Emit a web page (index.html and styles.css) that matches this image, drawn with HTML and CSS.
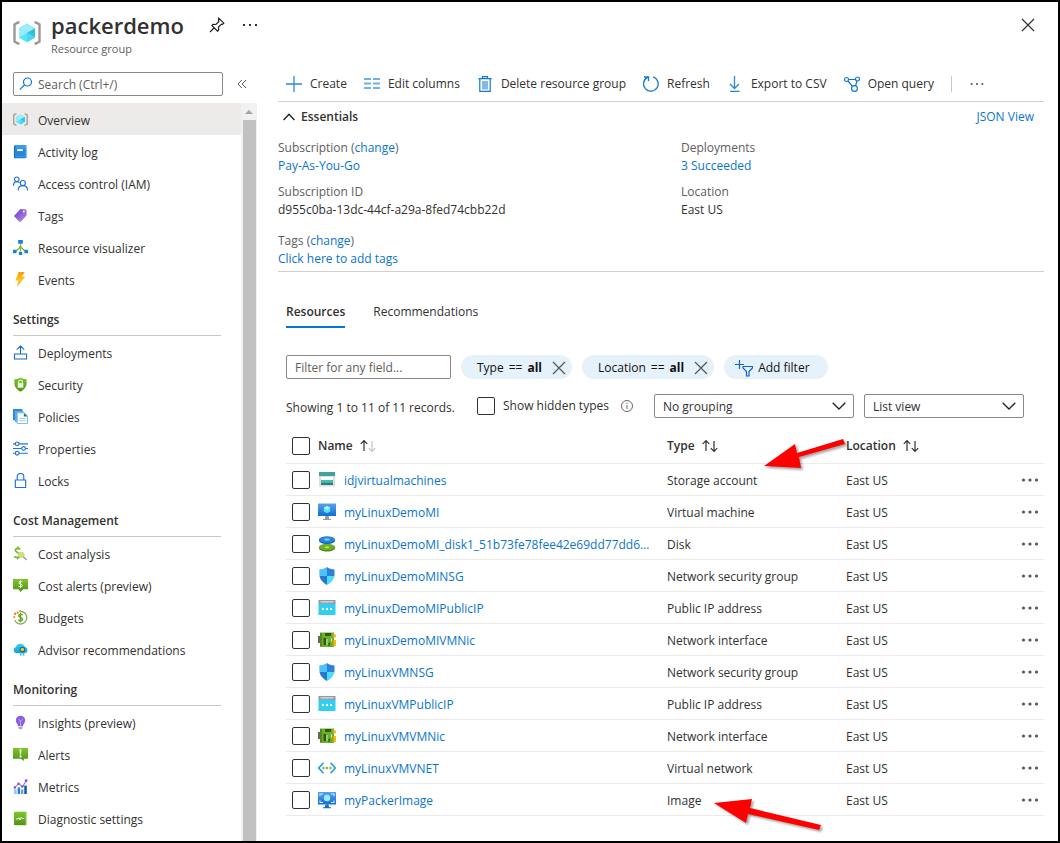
FILE: index.html
```html
<!DOCTYPE html>
<html lang="en">
<head>
<meta charset="utf-8">
<meta name="viewport" content="width=device-width, initial-scale=1">
<title>packerdemo - Resource group</title>
<link rel="stylesheet" href="styles.css">
</head>
<body>
<svg class="sprite" aria-hidden="true">
  <defs>
    <linearGradient id="g-blue" x1="0" y1="0" x2="0" y2="1"><stop offset="0" stop-color="#5ea0ef"/><stop offset="1" stop-color="#0f6fd0"/></linearGradient>
    <linearGradient id="g-green" x1="0" y1="0" x2="0" y2="1"><stop offset="0" stop-color="#7fc62c"/><stop offset="1" stop-color="#4f9217"/></linearGradient>
    <linearGradient id="g-purple" x1="0" y1="0" x2="1" y2="1"><stop offset="0" stop-color="#6a35c4"/><stop offset="1" stop-color="#b795ee"/></linearGradient>
    <linearGradient id="g-bolt" x1="0" y1="0" x2="0" y2="1"><stop offset="0" stop-color="#f99b16"/><stop offset=".5" stop-color="#fdc413"/><stop offset="1" stop-color="#fba81a"/></linearGradient>
    <linearGradient id="g-cyan" x1="0" y1="0" x2="0" y2="1"><stop offset="0" stop-color="#32d4f5"/><stop offset="1" stop-color="#1a9fd0"/></linearGradient>
  </defs>
  <symbol id="i-group" viewBox="0 0 28 28">
    <path d="M6.500 3.500H5L1.500 5.500V22.500L5 24.500H6.500M21.500 3.500H23L26.500 5.500V22.500L23 24.500H21.500" fill="none" stroke="#999" stroke-width="2.400"/>
    <path d="M14 4.500l8 4.700v9.400l-8 4.700-8-4.700V9.200z" fill="#50e6ff"/>
    <path d="M14 4.500l8 4.700-8 4.700-8-4.700z" fill="#9cebff"/>
    <path d="M22 9.200v9.400l-8-4.700z" fill="#32bedd"/><path d="M22 18.600l-8-4.700v9.400z" fill="#50d4f5"/><path d="M6 9.200l8 4.700-8 4.700z" fill="#9cebff"/>
  </symbol>
  <symbol id="i-log" viewBox="0 0 16 16">
    <rect x="2" y="1" width="13" height="14" rx="1" fill="#86c0f2"/><path d="M2 1h11.500v12.500H2z" fill="#3f9ae6"/><path d="M1 1.800h1.500V14h11v1.300H2.500Q1 15.300 1 14z" fill="#0f6cbd"/><path d="M2.500 5h11v8.500h-11z" fill="#2b88d8"/><rect x="4.500" y="5.500" width="6" height="2" fill="#fff"/>
  </symbol>
  <symbol id="i-people" viewBox="0 0 16 16" fill="none" stroke="#1f6fe0" stroke-width="1.200">
    <circle cx="4" cy="3.500" r="2.500"/><path d="M.5 10.500C.5 7.500 2 6 4 6q2 0 3 1.500"/><circle cx="10.500" cy="7.500" r="2.700"/><path d="M5.500 15.500c0-3.500 2-5.200 5-5.200s5 1.700 5 5.200"/>
  </symbol>
  <symbol id="i-tag" viewBox="0 0 16 16"><path d="M1 8.500L8 1l5.500.5L14.500 3v5L8.500 14.500Q7.500 15.500 6.500 14.500z" fill="url(#g-purple)"/><circle cx="11.500" cy="3.800" r="1.100" fill="#fff"/></symbol>
  <symbol id="i-tree" viewBox="0 0 16 16">
    <path d="M8 4v8M8 7.500L3 12M8 7.500l5 4.500" fill="none" stroke="#76bc2d" stroke-width="1.300"/><circle cx="8" cy="7.500" r="1.300" fill="#76bc2d"/>
    <path d="M5.500 0h5v4h-5zM0 10.500h3.800v3.500H0zM12.200 10.500H16V14h-3.800zM6.200 12.500h3.600V16H6.200z" fill="#1b7fdc"/>
  </symbol>
  <symbol id="i-bolt" viewBox="0 0 16 16"><path d="M6 0h6.500L9.500 5H13L4 16l2-7H2.500z" fill="url(#g-bolt)"/></symbol>
  <symbol id="i-deploy" viewBox="0 0 16 16" fill="none" stroke="#1566d6" stroke-width="1.100"><path d="M8 9V1M4 5l4-4 4 4M1.500 9.500h13v5.500h-13z"/></symbol>
  <symbol id="i-shieldlock" viewBox="0 0 16 16"><path d="M8 .5c2 1.500 4 1.800 6.500 1.800V7c0 4-3 6.800-6.500 8.700C4.500 13.800 1.500 11 1.500 7V2.300C4 2.300 6 2 8 .5z" fill="url(#g-green)"/><rect x="5" y="6.500" width="6" height="5" rx=".6" fill="#e8f5dc"/><path d="M6 7V5.300a2 2 0 014 0V7" fill="none" stroke="#e8f5dc" stroke-width="1.200"/></symbol>
  <symbol id="i-policy" viewBox="0 0 16 16"><path d="M0 0h10v3H3v9H0z" fill="#2b88d8"/><path d="M2 2h9v12H2z" fill="#5ea8ee"/><path d="M4.500 4H12l3.500 3.500V15.500H4.500z" fill="#fff" stroke="#76b6ee"/><path d="M11.500 4v4h4z" fill="#0f6cbd"/><path d="M6.500 10h7M6.500 12.500h7" stroke="#9cc8f2"/></symbol>
  <symbol id="i-sliders" viewBox="0 0 16 16" fill="none" stroke="#2275dd" stroke-width="1.200"><path d="M0 3h2.500M6.500 3H16M0 8h9M13.500 8H16M0 13h2.500M6.500 13H16"/><circle cx="4.500" cy="3" r="2"/><circle cx="11.300" cy="8" r="2"/><circle cx="4.500" cy="13" r="2"/></symbol>
  <symbol id="i-lock" viewBox="0 0 16 16" fill="none" stroke="#1f6fe0" stroke-width="1.200"><path d="M2.500 7.500h11v8h-11zM4.500 7.500V4a3.500 3.500 0 017 0v3.500"/></symbol>
  <symbol id="i-costsearch" viewBox="0 0 16 16" fill="none"><path d="M7.800 3.500C7 2.500 2.500 2 2.500 4.500S7.500 7 7.500 9.800 3 12.500 1.500 11M5 .5v2M5 12v2" stroke="#76bc2d" stroke-width="1.900"/><circle cx="9" cy="9.500" r="2.900" fill="#c8ee3c" stroke="#ccc"/><path d="M11 11.500l3.500 3.500" stroke="#999" stroke-width="1.400"/></symbol>
  <symbol id="i-costalert" viewBox="0 0 16 16"><path d="M0 1h16v11h-5l-3 3-2-3H0z" fill="url(#g-green)"/><path d="M10 4.300C9 3.300 6.300 3.300 6.300 5s3.500 1.200 3.500 3-3 1.600-3.900.6M8 2.500v8" stroke="#fff" fill="none"/></symbol>
  <symbol id="i-budget" viewBox="0 0 16 16" fill="none"><path d="M8 1.500A6.700 6.700 0 118 15 6.700 6.700 0 012 11" stroke="#76a83d" stroke-width="1.200"/><path d="M10.300 5.500C9.500 4.300 6 4.300 6 6.200s4.200 1.500 4.200 3.600-3.500 2-4.500.6M8 3v10" stroke="#5faa20" stroke-width="1.500"/><g fill="#f58220"><circle cx="1.300" cy="7.500" r="1.100"/><circle cx="2.300" cy="4" r="1.300"/><circle cx="5" cy="2.800" r="1.200"/><circle cx="7.500" cy="1" r="1"/></g></symbol>
  <symbol id="i-advisor" viewBox="0 0 16 16"><path d="M3.500 12A3.400 3.400 0 013 5.400 5 5 0 0112.500 5a3.600 3.600 0 01.5 7z" fill="url(#g-cyan)"/><path d="M8 11l-.5 4 1.700-1V12zM11.500 11l.8 4-1.800-1V12z" fill="#32c0e8"/><circle cx="10" cy="8" r="3" fill="#0f6a9c"/><circle cx="10" cy="8" r="1.900" fill="#ffc20e"/></symbol>
  <symbol id="i-bulb" viewBox="0 0 16 16"><path d="M8 .8a5 5 0 015 5c0 2.400-2 3.400-2.400 6H5.400C5 9.200 3 8.200 3 5.800a5 5 0 015-5z" fill="#8a5fd8"/><path d="M6 4.500l2 2 2-2M8 6.500V12" stroke="#c9aef5" fill="none"/><path d="M5.800 12.300h4.400v1.800L9 15.300H7l-1.200-1.200z" fill="#aaa"/></symbol>
  <symbol id="i-alert" viewBox="0 0 16 16"><path d="M0 1h16v11.500h-4.500V15L8.500 12.500H0z" fill="url(#g-green)"/><path d="M7 2.500h2l-.4 5.500H7.400z" fill="#fff"/><circle cx="8" cy="10" r="1.100" fill="#fff"/></symbol>
  <symbol id="i-metrics" viewBox="0 0 16 16"><path d="M1 11h3v5H1z" fill="#9cc8f2"/><path d="M5 9h2.500v7H5z" fill="#1b7fdc"/><path d="M8.500 11H11v5H8.500z" fill="#5ea0ef"/><path d="M12 7h2.700v9H12z" fill="#0f5aa8"/><path d="M2 9l4-4 4 3.500L14 2" stroke="#9b6be0" stroke-width="1.100" fill="none"/><g fill="#8a4fd8"><circle cx="2" cy="9" r="1.300"/><circle cx="6" cy="5" r="1.300"/><circle cx="10" cy="8" r="1.300"/><circle cx="14" cy="1.800" r="1.500"/></g></symbol>
  <symbol id="i-diag" viewBox="0 0 16 16"><rect x="2" y=".5" width="13" height="15" rx="1" fill="#b6dc8d"/><rect x="1" y="1" width="12.500" height="14" rx=".6" fill="url(#g-green)"/><path d="M3 8.500h2l1.500-1.500 1 2.500L9 6.500l1 1.500h2" stroke="#fff" fill="none"/></symbol>
  <symbol id="i-storage" viewBox="0 0 18 18"><path d="M1 1h16v4H1z" fill="#37a6a0"/><path d="M1 5h16v10.500H1z" fill="#ddd"/><path d="M3 6h12v3H3z" fill="#fff"/><path d="M3 9h12v2.500H3z" fill="#37c2b1"/><path d="M3 11.500h12V14H3z" fill="#258277"/></symbol>
  <symbol id="i-vm" viewBox="0 0 18 18"><path d="M0 .5h18V13H0z" fill="url(#g-blue)"/><path d="M9 3l3.200 1.800v3.700L9 10.300 5.800 8.500V4.800z" fill="#50e6ff"/><path d="M9 3l3.200 1.800L9 6.700 5.800 4.800z" fill="#c3f1ff"/><path d="M7.300 13h3.400l.5 3H13v1H5v-1h1.800z" fill="#999"/></symbol>
  <symbol id="i-disk" viewBox="0 0 18 18"><path d="M1 12v1.200c0 1.800 3.500 3.300 8 3.300s8-1.500 8-3.300V12z" fill="#4f8a1c"/><ellipse cx="9" cy="12" rx="8" ry="3.300" fill="#6cae2c"/><ellipse cx="9" cy="12.300" rx="2.500" ry="1" fill="#b4ec36"/><path d="M1 4.500v1.200C1 7.500 4.500 9 9 9s8-1.500 8-3.300V4.500z" fill="#0f68bd"/><ellipse cx="9" cy="4.500" rx="8" ry="3.300" fill="#2b83dc"/><ellipse cx="9" cy="4.500" rx="3" ry="1.100" fill="#83d5ff"/></symbol>
  <symbol id="i-nsg" viewBox="0 0 18 18"><clipPath id="shield-shape"><path d="M9 0c2.300 2 4.700 2.200 7.500 2.400V8c0 4.800-4 7.800-7.500 10C5.500 15.800 1.500 12.800 1.500 8V2.400C4.300 2.200 6.700 2 9 0z"/></clipPath><g clip-path="url(#shield-shape)"><path d="M0 0h9v9H0z" fill="#44a5f0"/><path d="M9 0h9v9H9z" fill="#2b83d8"/><path d="M0 9h9v9H0z" fill="#2878d0"/><path d="M9 9h9v9H9z" fill="#50dcff"/><path d="M0 2h9v7H0z" fill="#50dcff" opacity=".55"/></g></symbol>
  <symbol id="i-ip" viewBox="0 0 18 18"><path d="M.5 1h17v4H.5z" fill="#999"/><path d="M2.500 2.200h13v1.300h-13z" fill="#ddd"/><path d="M.5 4.500h17v11.500H.5z" fill="#32cdf0"/><g fill="#fff"><circle cx="5" cy="10" r="1.200"/><circle cx="9" cy="10" r="1.200"/><circle cx="13" cy="10" r="1.200"/></g></symbol>
  <symbol id="i-nic" viewBox="0 0 18 18"><path d="M0 5h2v7H0z" fill="#666"/><path d="M2 1.500h14V16H2z" fill="#6cb02c"/><path d="M15.500 3.500H18v3h-2.500zM15.500 9H18v6h-2.500z" fill="#ffb900"/><path d="M2 2h2v13H2z" fill="#4f8a1c"/><path d="M7 2h6v3H7zM5.500 7H8v7H5.500zM10.500 11.500H12V15h-1.500z" fill="#2f5b10"/><path d="M9 8v6M13.500 7v4" stroke="#c5e89c"/></symbol>
  <symbol id="i-vnet" viewBox="0 0 18 18"><path d="M5.500 3.800L.8 9l4.700 5.200M12.500 3.800L17.200 9l-4.700 5.200" fill="none" stroke="#2b9fe8" stroke-width="1.700"/><g fill="#76bc2d"><circle cx="5.500" cy="9" r="1.200"/><circle cx="9" cy="9" r="1.200"/><circle cx="12.500" cy="9" r="1.200"/></g></symbol>
  <symbol id="i-image" viewBox="0 0 18 18"><path d="M0 1h18v12.500H0z" fill="url(#g-blue)"/><path d="M2 5V3h3M13 3h3v2M2 9.500v2h3M13 11.500h3v-2" stroke="#c3f1ff" stroke-width="1.100" fill="none"/><circle cx="9" cy="7" r="3.200" fill="#9cebff"/><path d="M7.500 13.500h3l.7 2.700H13v1H5v-1h1.800z" fill="#0f6fb8"/></symbol>
  <symbol id="i-chevron" viewBox="0 0 14 8"><path d="M.7.700L7 7 13.300.700" fill="none" stroke="#222" stroke-width="1.300"/></symbol>
  <symbol id="i-x" viewBox="0 0 14 14"><path d="M1 1l12 12M13 1L1 13" fill="none" stroke="currentColor" stroke-width="1.200"/></symbol>
  <symbol id="i-dots" viewBox="0 0 18 6"><g fill="currentColor"><circle cx="2.500" cy="3" r="1.600"/><circle cx="9" cy="3" r="1.600"/><circle cx="15.500" cy="3" r="1.600"/></g></symbol>
  <symbol id="i-dots-sq" viewBox="0 0 18 6"><path d="M2 2h2v2H2zM8 2h2v2H8zM14 2h2v2h-2z" fill="currentColor"/></symbol>
  <symbol id="i-up" viewBox="0 0 8 14"><path d="M4 12V1.500M.8 4.800L4 1.500l3.200 3.300" fill="none" stroke="currentColor" stroke-width="1.200"/></symbol>
  <symbol id="i-down" viewBox="0 0 8 14"><path d="M4 2v10.500M.8 9.200L4 12.500l3.200-3.300" fill="none" stroke="currentColor" stroke-width="1.200"/></symbol>
</svg>

<div class="blade">
  <header class="blade-header">
    <svg class="brand-icon"><use href="#i-group"/></svg>
    <div class="brand">
      <h1>packerdemo</h1>
      <p>Resource group</p>
    </div>
    <button class="icon-button" type="button" aria-label="Pin to dashboard"><svg width="16" height="16" viewBox="0 0 16 16" fill="none" stroke="#222" stroke-width="1.200"><path d="M9.800 1.200l5 5-1.300 1.200-1-.3-3 3 .2 2.800-1.200 1.200-5.600-5.600 1.200-1.200 2.800.2 3-3-.4-1.300zM5.500 10.500L1 15"/></svg></button>
    <button class="icon-button" type="button" aria-label="More"><svg width="18" height="6"><use href="#i-dots-sq"/></svg></button>
    <button class="icon-button close" type="button" aria-label="Close"><svg width="14" height="14"><use href="#i-x"/></svg></button>
  </header>

  <div class="blade-body">
    <aside class="sidebar">
      <div class="search-row">
        <div class="search">
          <svg width="14" height="14" viewBox="0 0 14 14" fill="none" stroke="#0f78d4" stroke-width="1.200"><circle cx="8.500" cy="5" r="4"/><path d="M5.500 8L.8 12.700"/></svg>
          <input type="text" placeholder="Search (Ctrl+/)" aria-label="Search menu">
        </div>
        <button class="icon-button" type="button" aria-label="Collapse menu"><svg width="10" height="10" viewBox="0 0 10 10" fill="none" stroke="#555"><path d="M4.800 1L1 5l3.800 4M9 1L5.200 5 9 9"/></svg></button>
      </div>
      <div class="menu-area">
        <nav class="menu" aria-label="Resource menu">
          <a class="item selected" href="#"><svg><use href="#i-group"/></svg>Overview</a>
          <a class="item" href="#"><svg><use href="#i-log"/></svg>Activity log</a>
          <a class="item" href="#"><svg><use href="#i-people"/></svg>Access control (IAM)</a>
          <a class="item" href="#"><svg><use href="#i-tag"/></svg>Tags</a>
          <a class="item" href="#"><svg><use href="#i-tree"/></svg>Resource visualizer</a>
          <a class="item" href="#"><svg><use href="#i-bolt"/></svg>Events</a>
          <h2>Settings</h2>
          <a class="item" href="#"><svg><use href="#i-deploy"/></svg>Deployments</a>
          <a class="item" href="#"><svg><use href="#i-shieldlock"/></svg>Security</a>
          <a class="item" href="#"><svg><use href="#i-policy"/></svg>Policies</a>
          <a class="item" href="#"><svg><use href="#i-sliders"/></svg>Properties</a>
          <a class="item" href="#"><svg><use href="#i-lock"/></svg>Locks</a>
          <h2>Cost Management</h2>
          <a class="item" href="#"><svg><use href="#i-costsearch"/></svg>Cost analysis</a>
          <a class="item" href="#"><svg><use href="#i-costalert"/></svg>Cost alerts (preview)</a>
          <a class="item" href="#"><svg><use href="#i-budget"/></svg>Budgets</a>
          <a class="item" href="#"><svg><use href="#i-advisor"/></svg>Advisor recommendations</a>
          <h2>Monitoring</h2>
          <a class="item" href="#"><svg><use href="#i-bulb"/></svg>Insights (preview)</a>
          <a class="item" href="#"><svg><use href="#i-alert"/></svg>Alerts</a>
          <a class="item" href="#"><svg><use href="#i-metrics"/></svg>Metrics</a>
          <a class="item" href="#"><svg><use href="#i-diag"/></svg>Diagnostic settings</a>
        </nav>
        <div class="scrollbar" aria-hidden="true"><svg width="8" height="4" viewBox="0 0 8 4"><path d="M0 4l4-4 4 4z" fill="#a3a3a3"/></svg><div class="thumb"></div></div>
      </div>
    </aside>

    <main class="content">
      <div class="toolbar">
        <button type="button"><svg viewBox="0 0 16 16"><path d="M8 0v16M0 8h16" stroke="#2b88d8" stroke-width="1.300"/></svg>Create</button>
        <button type="button"><svg viewBox="0 0 16 16"><path d="M0 3h7M9 3h7M0 7.500h7M9 7.500h7M0 12h7M9 12h7" stroke="#6fb1ea" stroke-width="2"/></svg>Edit columns</button>
        <button type="button"><svg viewBox="0 0 16 16" fill="none" stroke="#0f78d4" stroke-width="1.200"><path d="M1.500 2.600h13M5.500 2.500V.6h5v1.900M2.800 2.600v12.800h10.400V2.600"/><path d="M5 5h6v8.500H5z" fill="#7fbaec" stroke="none"/></svg>Delete resource group</button>
        <button type="button"><svg viewBox="0 0 16 16" fill="none" stroke="#0f78d4" stroke-width="1.300"><path d="M10 .9a7.300 7.300 0 11-5.500.5M1 1h4.500v4"/></svg>Refresh</button>
        <button type="button"><svg viewBox="0 0 16 16" fill="none" stroke="#2b88d8" stroke-width="1.300"><path d="M7.500 0v12M3 8l4.500 4.500L12 8M3 15.300h9.500"/></svg>Export to CSV</button>
        <button type="button"><svg viewBox="0 0 16 16" fill="none" stroke="#0f78d4" stroke-width="1.200"><circle cx="2.500" cy="3.500" r="2"/><circle cx="13.500" cy="3" r="2"/><circle cx="10.500" cy="12.500" r="2.900"/><path d="M4.500 3.500h7M4 5l4.500 5.500M13 5l-1.500 5"/></svg>Open query</button>
        <span class="divider"></span>
        <button class="more" type="button" aria-label="More commands"><svg viewBox="0 0 18 6"><use href="#i-dots-sq"/></svg></button>
      </div>

      <section class="essentials">
        <div class="essentials-head">
          <button type="button"><svg width="12" height="8" viewBox="0 0 12 8" fill="none" stroke="#222" stroke-width="1.400"><path d="M.6 7L6 1.300 11.400 7"/></svg>Essentials</button>
          <a href="#">JSON View</a>
        </div>
        <dl class="facts">
          <div><dt>Subscription (<a href="#">change</a>)</dt><dd><a href="#">Pay-As-You-Go</a></dd></div>
          <div><dt>Deployments</dt><dd><a href="#">3 Succeeded</a></dd></div>
          <div><dt>Subscription ID</dt><dd>d955c0ba-13dc-44cf-a29a-8fed74cbb22d</dd></div>
          <div><dt>Location</dt><dd>East US</dd></div>
          <div class="tags"><dt>Tags (<a href="#">change</a>)</dt><dd><a href="#">Click here to add tags</a></dd></div>
        </dl>
      </section>

      <section class="resources">
        <div class="tabs" role="tablist">
          <button type="button" role="tab" aria-selected="true">Resources</button>
          <button type="button" role="tab" aria-selected="false">Recommendations</button>
        </div>

        <div class="filters">
          <input class="filter-box" type="text" placeholder="Filter for any field..." aria-label="Filter for any field">
          <span class="pill"><span>Type</span><span>==</span><b>all</b><button type="button" aria-label="Remove type filter"><svg width="14" height="14"><use href="#i-x"/></svg></button></span>
          <span class="pill"><span>Location</span><span>==</span><b>all</b><button type="button" aria-label="Remove location filter"><svg width="14" height="14"><use href="#i-x"/></svg></button></span>
          <button class="pill add" type="button"><svg width="18" height="18" viewBox="0 0 18 18" fill="none" stroke="#0f62d8" stroke-width="1.200"><path d="M0 5.500h9M4.500 1v9M8 7.500h9.500v1.500l-3.500 3.500v4.500h-2.500v-4.500L8 9z"/></svg>Add filter</button>
        </div>

        <div class="list-options">
          <span class="count">Showing 1 to 11 of 11 records.</span>
          <label class="hidden-types"><input type="checkbox">Show hidden types</label>
          <svg class="info" width="12" height="12" viewBox="0 0 12 12" fill="none" stroke="#666"><circle cx="6" cy="6" r="5.500"/><path d="M6 5v4M6 2.800V4"/></svg>
          <div class="select grouping"><select aria-label="Grouping"><option>No grouping</option></select><svg width="14" height="8"><use href="#i-chevron"/></svg></div>
          <div class="select view"><select aria-label="View"><option>List view</option></select><svg width="14" height="8"><use href="#i-chevron"/></svg></div>
        </div>

        <table>
          <colgroup><col class="c-check"><col class="c-name"><col class="c-type"><col class="c-location"><col class="c-menu"></colgroup>
          <thead>
            <tr>
              <th><input type="checkbox" aria-label="Select all"></th>
              <th><span class="sort">Name<span class="arrows"><svg><use href="#i-up"/></svg><svg class="dim"><use href="#i-down"/></svg></span></span></th>
              <th><span class="sort">Type<span class="arrows"><svg><use href="#i-up"/></svg><svg><use href="#i-down"/></svg></span></span></th>
              <th><span class="sort">Location<span class="arrows"><svg><use href="#i-up"/></svg><svg><use href="#i-down"/></svg></span></span></th>
              <th></th>
            </tr>
          </thead>
          <tbody>
            <tr><td><input type="checkbox" aria-label="Select idjvirtualmachines"></td><td><a class="res" href="#"><svg><use href="#i-storage"/></svg><span>idjvirtualmachines</span></a></td><td class="text anchor">Storage account
              <svg class="callout callout-storage" width="92" height="44" viewBox="0 0 92 44" aria-hidden="true"><path d="M3 32L34 10l2 9L82 5l2 5-46 13 2 11z" fill="#f00"/></svg></td><td class="text">East US</td><td><button class="row-menu" type="button" aria-label="Row actions"><svg width="18" height="6"><use href="#i-dots"/></svg></button></td></tr>
            <tr><td><input type="checkbox" aria-label="Select myLinuxDemoMI"></td><td><a class="res" href="#"><svg><use href="#i-vm"/></svg><span>myLinuxDemoMI</span></a></td><td class="text">Virtual machine</td><td class="text">East US</td><td><button class="row-menu" type="button" aria-label="Row actions"><svg width="18" height="6"><use href="#i-dots"/></svg></button></td></tr>
            <tr><td><input type="checkbox" aria-label="Select myLinuxDemoMI disk"></td><td><a class="res" href="#"><svg><use href="#i-disk"/></svg><span>myLinuxDemoMI_disk1_51b73fe78fee42e69dd77dd6…</span></a></td><td class="text">Disk</td><td class="text">East US</td><td><button class="row-menu" type="button" aria-label="Row actions"><svg width="18" height="6"><use href="#i-dots"/></svg></button></td></tr>
            <tr><td><input type="checkbox" aria-label="Select myLinuxDemoMINSG"></td><td><a class="res" href="#"><svg><use href="#i-nsg"/></svg><span>myLinuxDemoMINSG</span></a></td><td class="text">Network security group</td><td class="text">East US</td><td><button class="row-menu" type="button" aria-label="Row actions"><svg width="18" height="6"><use href="#i-dots"/></svg></button></td></tr>
            <tr><td><input type="checkbox" aria-label="Select myLinuxDemoMIPublicIP"></td><td><a class="res" href="#"><svg><use href="#i-ip"/></svg><span>myLinuxDemoMIPublicIP</span></a></td><td class="text">Public IP address</td><td class="text">East US</td><td><button class="row-menu" type="button" aria-label="Row actions"><svg width="18" height="6"><use href="#i-dots"/></svg></button></td></tr>
            <tr><td><input type="checkbox" aria-label="Select myLinuxDemoMIVMNic"></td><td><a class="res" href="#"><svg><use href="#i-nic"/></svg><span>myLinuxDemoMIVMNic</span></a></td><td class="text">Network interface</td><td class="text">East US</td><td><button class="row-menu" type="button" aria-label="Row actions"><svg width="18" height="6"><use href="#i-dots"/></svg></button></td></tr>
            <tr><td><input type="checkbox" aria-label="Select myLinuxVMNSG"></td><td><a class="res" href="#"><svg><use href="#i-nsg"/></svg><span>myLinuxVMNSG</span></a></td><td class="text">Network security group</td><td class="text">East US</td><td><button class="row-menu" type="button" aria-label="Row actions"><svg width="18" height="6"><use href="#i-dots"/></svg></button></td></tr>
            <tr><td><input type="checkbox" aria-label="Select myLinuxVMPublicIP"></td><td><a class="res" href="#"><svg><use href="#i-ip"/></svg><span>myLinuxVMPublicIP</span></a></td><td class="text">Public IP address</td><td class="text">East US</td><td><button class="row-menu" type="button" aria-label="Row actions"><svg width="18" height="6"><use href="#i-dots"/></svg></button></td></tr>
            <tr><td><input type="checkbox" aria-label="Select myLinuxVMVMNic"></td><td><a class="res" href="#"><svg><use href="#i-nic"/></svg><span>myLinuxVMVMNic</span></a></td><td class="text">Network interface</td><td class="text">East US</td><td><button class="row-menu" type="button" aria-label="Row actions"><svg width="18" height="6"><use href="#i-dots"/></svg></button></td></tr>
            <tr><td><input type="checkbox" aria-label="Select myLinuxVMVNET"></td><td><a class="res" href="#"><svg><use href="#i-vnet"/></svg><span>myLinuxVMVNET</span></a></td><td class="text">Virtual network</td><td class="text">East US</td><td><button class="row-menu" type="button" aria-label="Row actions"><svg width="18" height="6"><use href="#i-dots"/></svg></button></td></tr>
            <tr><td><input type="checkbox" aria-label="Select myPackerImage"></td><td><a class="res" href="#"><svg><use href="#i-image"/></svg><span>myPackerImage</span></a></td><td class="text anchor">Image
              <svg class="callout callout-image" width="116" height="46" viewBox="0 0 116 46" aria-hidden="true"><path d="M3 8L41 4l-2 9 71 17-2 5-71-16-2 9z" fill="#f00"/></svg></td><td class="text">East US</td><td><button class="row-menu" type="button" aria-label="Row actions"><svg width="18" height="6"><use href="#i-dots"/></svg></button></td></tr>
          </tbody>
        </table>
      </section>
    </main>
  </div>
</div>
</body>
</html>
```
FILE: styles.css
```css
* {
  box-sizing: border-box;
}

body {
  margin: 0;
  background: #fff;
  color: #323130;
  font: 12px/18px "Open Sans", "Noto Sans", sans-serif;
}

h1, h2, p, dl, dd {
  margin: 0;
}

a {
  color: #0a75cf;
  text-decoration: none;
}

svg {
  display: block;
  flex: none;
}

button, input, select {
  color: inherit;
  font: inherit;
}

button {
  padding: 0;
  border: 0;
  background: none;
}

input[type="checkbox"] {
  display: block;
  flex: none;
  width: 18px;
  height: 18px;
  margin: 0;
  appearance: none;
  border: 1px solid #323130;
  border-radius: 2px;
  background: #fff;
}

input::placeholder {
  color: #605e5c;
  opacity: 1;
}

.sprite {
  position: absolute;
  width: 0;
  height: 0;
}

.blade {
  display: flex;
  flex-direction: column;
  min-height: 100vh;
  border: 2px solid #000;
}

/* Header */
.blade-header {
  display: flex;
  align-items: flex-start;
  height: 70px;
  padding: 8px 23px 0 11px;
}

.brand-icon {
  width: 28px;
  height: 28px;
  margin: 9px 10px 0 0;
}

.brand h1 {
  font-size: 22px;
  line-height: 30px;
  font-weight: 600;
}

.brand p {
  color: #605e5c;
  font-size: 11px;
}

.icon-button {
  display: flex;
  align-items: center;
  justify-content: center;
  height: 30px;
}

.blade-header .icon-button {
  margin-left: 25px;
}

.blade-header .icon-button + .icon-button {
  margin-left: 16px;
}

.blade-header .icon-button.close {
  margin-left: auto;
}

.blade-body {
  display: flex;
  flex: 1;
}

/* Sidebar */
.sidebar {
  display: flex;
  flex: none;
  flex-direction: column;
  width: 255px;
}

.search-row {
  display: flex;
  align-items: center;
  gap: 14px;
  height: 24px;
  margin: 0 0 7px 11px;
}

.search {
  display: flex;
  align-items: center;
  gap: 5px;
  width: 210px;
  height: 24px;
  padding: 0 5px;
  border: 1px solid #8a8886;
  border-radius: 2px;
}

.search input {
  width: 100%;
  min-width: 0;
  padding: 1px 0 0;
  border: 0;
  background: none;
}

.menu-area {
  display: flex;
  flex: 1;
}

.menu {
  flex: 1;
}

.item {
  display: flex;
  align-items: center;
  gap: 10px;
  height: 32px;
  padding: 3px 0 0 11px;
  color: #323130;
}

.item svg {
  width: 15px;
  height: 15px;
  margin-bottom: 3px;
}

.item.selected {
  background: #edebe9;
}

.menu h2 {
  height: 41px;
  margin: 0 20px 0 11px;
  padding-top: 16px;
  border-bottom: 1px solid #c8c6c4;
  font-size: 12px;
  font-weight: 600;
}

.scrollbar {
  display: flex;
  flex-direction: column;
  align-items: center;
  gap: 6px;
  width: 16px;
  padding-top: 7px;
  background: #f1f1f1;
}

.thumb {
  flex: 1;
  width: 13px;
  background: #c1c1c1;
}

/* Content */
.content {
  flex: 1;
  min-width: 0;
  padding: 0 14px 0 21px;
}

.toolbar {
  display: flex;
  align-items: center;
  gap: 17px;
  height: 30px;
  padding: 0 0 5px 8px;
  border-bottom: 1px solid #d2d0ce;
  white-space: nowrap;
}

.toolbar button {
  display: flex;
  align-items: center;
  gap: 8px;
}

.toolbar svg {
  width: 16px;
  height: 16px;
}

.toolbar .more {
  color: #666;
}

.divider {
  width: 1px;
  height: 16px;
  background: #c8c6c4;
}

.essentials {
  height: 170px;
  border-bottom: 1px solid #d2d0ce;
}

.essentials-head {
  display: flex;
  align-items: center;
  justify-content: space-between;
  padding: 6px 10px 0 5px;
}

.essentials-head button {
  display: flex;
  align-items: center;
  gap: 6px;
  font-weight: 600;
}

.facts {
  display: grid;
  grid-template-columns: 403px 1fr;
  row-gap: 8px;
  padding-top: 13px;
}

.facts dt {
  color: #605e5c;
}

.facts .tags {
  padding-top: 5px;
}

.resources {
  padding: 30px 0 0 8px;
}

.tabs {
  display: flex;
  gap: 28px;
}

.tabs button {
  height: 26px;
  padding-bottom: 4px;
  border-bottom: 2px solid transparent;
}

.tabs [aria-selected="true"] {
  border-color: #0078d4;
  font-weight: 600;
}

.filters {
  display: flex;
  gap: 10px;
  margin-top: 27px;
}

.filter-box {
  width: 165px;
  height: 24px;
  padding: 0 8px;
  border: 1px solid #8a8886;
  border-radius: 2px;
}

.pill {
  display: flex;
  align-items: center;
  gap: 5px;
  height: 24px;
  padding: 1px 6px 0 16px;
  border-radius: 12px;
  background: #e5f1fb;
  color: #111;
  white-space: nowrap;
}

.pill button {
  margin-left: 5px;
  color: #555;
}

.pill.add {
  padding: 1px 18px 0 11px;
}

.list-options {
  display: flex;
  align-items: center;
  height: 24px;
  margin-top: 15px;
  white-space: nowrap;
}

.count {
  width: 191px;
  padding-top: 3px;
}

.hidden-types {
  display: flex;
  align-items: center;
  gap: 8px;
}

.info {
  margin: 0 21px 0 12px;
}

.select {
  display: grid;
  align-items: center;
}

.select select,
.select svg {
  grid-area: 1 / 1;
}

.select select {
  width: 100%;
  height: 24px;
  padding: 1px 8px 0;
  appearance: none;
  border: 1px solid #8a8886;
  border-radius: 2px;
  background: #fff;
}

.select svg {
  justify-self: end;
  margin-right: 8px;
  pointer-events: none;
}

.grouping {
  width: 200px;
  margin-right: 10px;
}

.view {
  width: 160px;
}

/* Resource table */
table {
  width: 100%;
  margin-top: 10px;
  border-collapse: separate;
  border-spacing: 0;
  table-layout: fixed;
}

.c-check { width: 32px; }
.c-type { width: 179px; }
.c-location { width: 175px; }
.c-menu { width: 23px; }

th, td {
  height: 32px;
  padding: 0;
  border-bottom: 1px solid #edebe9;
  text-align: left;
  vertical-align: middle;
}

th {
  height: 36px;
  font-weight: 600;
}

td.text {
  padding-top: 2px;
}

th:first-child,
td:first-child {
  padding-left: 6px;
}

.sort {
  display: flex;
  gap: 7px;
}

.arrows {
  display: flex;
  align-items: center;
}

.arrows svg {
  width: 8px;
  height: 14px;
}

.arrows svg.dim {
  color: #c8c6c4;
}

.res {
  display: flex;
  align-items: center;
  gap: 8px;
}

.res svg {
  width: 18px;
  height: 18px;
}

.res span {
  overflow: hidden;
  padding-top: 3px;
  text-overflow: ellipsis;
  white-space: nowrap;
}

.row-menu {
  display: block;
  color: #555;
}

.anchor {
  position: relative;
}

.callout {
  position: absolute;
  filter: drop-shadow(2px 2px 1px rgba(0, 0, 0, .35));
}

.callout-storage {
  top: -30px;
  left: 94px;
}

.callout-image {
  top: 11px;
  left: 44px;
}
```
